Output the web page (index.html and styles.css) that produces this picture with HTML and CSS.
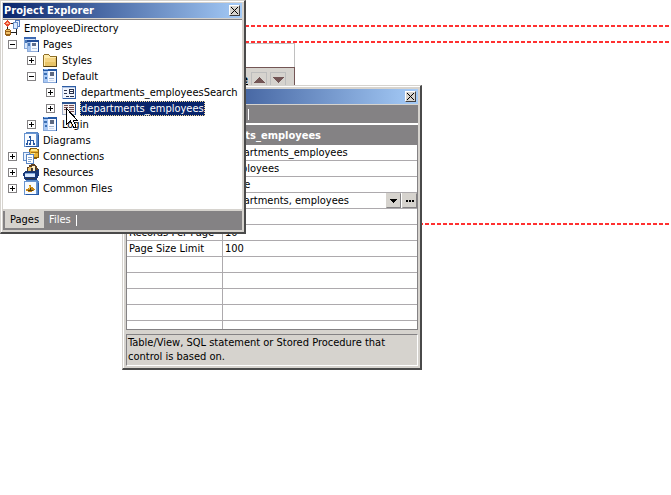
FILE: index.html
```html
<!DOCTYPE html>
<html lang="en">
<head>
<meta charset="utf-8">
<title>Project Explorer</title>
<link rel="stylesheet" href="styles.css">
</head>
<body>
<svg class="defs" aria-hidden="true">
  <symbol id="i-project" viewBox="0 0 16 16">
    <path fill="#e84c30" d="M3 0h1v1h1v1h1v1h1v1h-1v1h-1v1h-1v1h-1v-1h-1v-1h-1v-1h-1v-1h1v-1h1v-1h1z"/>
    <path fill="#ffb890" d="M3 2h1v1h1v1h-3v-1h1z"/>
    <path fill="#5078bc" d="M11 0h5v7h-5z"/><path fill="#e8f0ff" d="M12 1h3v5h-3z"/>
    <path fill="#6890c8" d="M9 2h5v7h-5z"/><path fill="#d8e8ff" d="M10 3h3v5h-3z"/>
    <path fill="#222" d="M7 3h2v1h-2zM3 7h1v3h-1zM6 12h6v1h-6zM12 9h1v6h-1z"/>
    <path fill="#986018" d="M2 9h4v1h1v5h-1v1h-4v-1h-1v-5h1z"/><path fill="#f0c068" d="M2 10h4v1h-4zM2 12h4v2h-4z"/>
  </symbol>
  <symbol id="i-pages" viewBox="0 0 16 16">
    <path fill="#88a8d8" d="M1 1h12v12h-12z"/><path fill="#d8e8fc" d="M2 3h10v9h-10z"/><path fill="#3c68b0" d="M1 1h12v2h-12z"/>
    <path fill="#90acd8" d="M4 4h12v12h-12z"/><path fill="#f4f8ff" d="M5 6h10v9h-10z"/><path fill="#204c98" d="M4 4h12v2h-12zM15 5h1v11h-1z"/>
    <path fill="#a4c4f0" d="M5 6h3v9h-3z"/><path fill="#5c6c8c" d="M9 7h4v3h-4z"/><path fill="#4878b8" d="M5 7h2v3h-2zM2 4h2v3h-2z"/><path fill="#b8c8e0" d="M9 12h5v1h-5z"/>
  </symbol>
  <symbol id="i-folder" viewBox="0 0 16 16">
    <path fill="#907028" d="M2 2h5v1h1v1h7v11h-14v-12h1z"/><path fill="#ffecac" d="M2 3h5v1h1v1h6v9h-12z"/>
    <path fill="#e8c468" d="M3 6h11v8h-11z"/><path fill="#f4d484" d="M3 6h10v4h-10z"/><path fill="#584010" d="M14 5h1v10h-13v-1h12z"/>
  </symbol>
  <symbol id="i-page" viewBox="0 0 16 16">
    <path fill="#88a8d8" d="M1 1h14v14h-14z"/><path fill="#f6f9ff" d="M2 3h12v11h-12z"/><path fill="#2458a4" d="M1 1h14v2h-14zM14 3h1v12h-1z"/>
    <path fill="#80b0ec" d="M2 1h4v1h-4z"/><path fill="#a8c8f4" d="M2 3h4v11h-4z"/><path fill="#3c70b4" d="M2 5h3v2h-3zM3 9h2v2h-2z"/>
    <path fill="#5c6880" d="M8 4h4v4h-4z"/><path fill="#a0b4d0" d="M7 10h5v1h-5z"/><path fill="#d0dcf0" d="M7 12h5v1h-5z"/>
  </symbol>
  <symbol id="i-search" viewBox="0 0 16 16">
    <path fill="#b0c4e4" d="M1 2h14v13h-14z"/><path fill="#f0f4fc" d="M2 4h12v10h-12z"/><path fill="#2c5ca4" d="M1 2h14v1h-14zM14 3h1v12h-13v-1h12z"/>
    <path fill="#28324c" d="M3 6h3v1h-3zM3 9h3v1h-3zM8 5h5v5h-5zM5 12h3v1h-3zM9 12h4v1h-4z"/>
    <path fill="#fff" d="M9 6h3v1h-3zM9 8h3v1h-3z"/>
  </symbol>
  <symbol id="i-grid" viewBox="0 0 16 16">
    <path fill="#9cacc8" d="M1 2h14v13h-14z"/><path fill="#f4f0f0" d="M2 3h12v11h-12z"/><path fill="#2c5490" d="M1 2h14v2h-14zM14 3h1v12h-1z"/>
    <path fill="#744c50" d="M3 5h4v1h-4zM8 5h5v1h-5zM3 7h4v1h-4zM8 7h5v1h-5zM3 9h4v1h-4zM8 9h5v1h-5zM8 11h5v1h-5z"/>
  </symbol>
  <symbol id="i-diagrams" viewBox="0 0 16 16">
    <path fill="#5888c8" d="M3 0h12v1h1v13h-13z"/><path fill="#dce8fc" d="M4 1h10v12h-10z"/><path fill="#6894d0" d="M1 1h13v14h-13z"/><path fill="#f8fbff" d="M2 2h11v12h-11z"/>
    <path fill="#2858a0" d="M6 4h2v2h-2zM3 11h2v2h-2zM6 11h2v2h-2zM10 11h2v2h-2zM7 6h1v5h-1zM4 8h7v1h-7zM4 9h1v2h-1zM10 9h1v2h-1zM15 3h1v12h-13v-1h12z"/>
  </symbol>
  <symbol id="i-connections" viewBox="0 0 16 16">
    <path fill="#8c6008" d="M7 0h7v1h2v9h-2v1h-7v-1h-1v-9h1z"/><path fill="#e8b438" d="M7 2h8v7h-8z"/><path fill="#ffe890" d="M8 1h6v2h-6zM8 5h4v1h-4z"/><path fill="#a87410" d="M8 4h7v1h-7z"/>
    <path fill="#6890c8" d="M0 4h7v9h-7z"/><path fill="#e8f2ff" d="M1 5h5v7h-5z"/><path fill="#5884c4" d="M3 6h8v10h-8z"/><path fill="#fff" d="M4 7h6v8h-6z"/>
    <path fill="#88a8d0" d="M5 9h4v1h-4zM5 11h4v1h-4zM5 13h3v1h-3z"/>
  </symbol>
  <symbol id="i-resources" viewBox="0 0 16 16">
    <path fill="#604020" d="M6 1h2v-1h4v1h1v1h1v2h1v4h-11v-5h2z"/><path fill="#f0c468" d="M6 3h3v4h-4v-3h1z"/><path fill="#fff0c8" d="M9 2h3v5h-2v-3h-1z"/>
    <path fill="#183878" d="M2 7h11v-1h2v-1h1v7h-1v2h-1v2h-12v-1h-1v-3h-1v-3h1v-1h1z"/><path fill="#80a8dc" d="M2 9h10v1h-10z"/><path fill="#d8e8ff" d="M2 10h10v3h-10z"/><path fill="#303848" d="M4 5h1v3h-1zM8 4h1v4h-1zM12 4h1v4h-1zM3 14h9v1h-9z"/>
  </symbol>
  <symbol id="i-common" viewBox="0 0 16 16">
    <path fill="#5888c8" d="M3 0h12v1h1v13h-13z"/><path fill="#dce8fc" d="M4 1h10v12h-10z"/><path fill="#6894d0" d="M1 1h13v14h-13z"/><path fill="#f8fbff" d="M2 2h11v12h-11z"/>
    <path fill="#2458a8" d="M15 3h1v12h-13v-1h12z"/>
    <path fill="#c88818" d="M6 5h2v2h2v1h1v1h1v1h-1v1h-2v1h-4v-1h-2v-2h2v-1h1z"/><path fill="#503c18" d="M7 8h1v2h-1zM5 10h5v1h-5z"/><path fill="#f8cc60" d="M6 6h1v3h-1z"/>
  </symbol>
  <symbol id="i-close" viewBox="0 0 7 7">
    <path fill="#000" d="M0 0h1v1h-1zM1 1h1v1h-1zM2 2h1v1h-1zM3 3h1v1h-1zM4 4h1v1h-1zM5 5h1v1h-1zM6 6h1v1h-1zM6 0h1v1h-1zM5 1h1v1h-1zM4 2h1v1h-1zM2 4h1v1h-1zM1 5h1v1h-1zM0 6h1v1h-1z"/>
  </symbol>
</svg>

<main class="page">
  <hr class="guide">
  <hr class="guide">
  <section class="preview">
    <div class="preview-top"></div>
    <div class="preview-head">
      <a href="#">Name</a>
      <button class="sort" aria-label="Sort ascending"><svg viewBox="0 0 11 6"><path fill="#735555" d="M5 0h1v1h1v1h1v1h1v1h1v1h1v1h-11v-1h1v-1h1v-1h1v-1h1v-1h1z"/></svg></button>
      <button class="sort" aria-label="Sort descending"><svg viewBox="0 0 11 6"><path fill="#735555" d="M0 0h11v1h-1v1h-1v1h-1v1h-1v1h-1v1h-1v-1h-1v-1h-1v-1h-1v-1h-1v-1h-1z"/></svg></button>
    </div>
  </section>
  <hr class="guide">
</main>

<section class="window properties">
  <header class="titlebar"><h2>Properties</h2><button class="close" aria-label="Close properties"><svg><use href="#i-close"/></svg></button></header>
  <nav class="tabs short"><button class="tab active">Data</button><button class="tab">Format</button><span class="caret"></span></nav>
  <div class="sheet">
    <table>
      <caption>Grid: departments_employees</caption>
      <tbody>
        <tr><th scope="row">Name</th><td>departments_employees</td></tr>
        <tr><th scope="row">Caption</th><td>Employees</td></tr>
        <tr><th scope="row">Source Type</th><td>Table</td></tr>
        <tr><th scope="row"><label for="source">Data Source</label></th><td><div class="combo"><input id="source" value="departments, employees"><button aria-label="Show list"><svg class="drop" viewBox="0 0 7 4"><path d="M0 0h7v1h-1v1h-1v1h-1v1h-1v-1h-1v-1h-1v-1h-1z"/></svg></button><button aria-label="Browse"><svg class="dots" viewBox="0 0 8 2"><path d="M0 0h2v2h-2zM3 0h2v2h-2zM6 0h2v2h-2z"/></svg></button></div></td></tr>
        <tr><th scope="row">Order By</th><td></td></tr>
        <tr><th scope="row">Records Per Page</th><td>10</td></tr>
        <tr><th scope="row">Page Size Limit</th><td>100</td></tr>
        <tr><th></th><td></td></tr>
        <tr><th></th><td></td></tr>
        <tr><th></th><td></td></tr>
        <tr><th></th><td></td></tr>
        <tr class="last"><th></th><td></td></tr>
      </tbody>
    </table>
  </div>
  <p class="hint">Table/View, SQL statement or Stored Procedure that control is based on.</p>
</section>

<section class="window explorer">
  <header class="titlebar"><h1>Project Explorer</h1><button class="close" aria-label="Close explorer"><svg><use href="#i-close"/></svg></button></header>
  <div class="tree">
    <div class="row root"><svg class="icon"><use href="#i-project"/></svg><span>EmployeeDirectory</span></div>
    <ul>
      <li><div class="row"><button class="toggle open" aria-label="Collapse Pages"></button><svg class="icon"><use href="#i-pages"/></svg><span>Pages</span></div>
        <ul>
          <li><div class="row"><button class="toggle" aria-label="Expand Styles"></button><svg class="icon"><use href="#i-folder"/></svg><span>Styles</span></div></li>
          <li><div class="row"><button class="toggle open" aria-label="Collapse Default"></button><svg class="icon"><use href="#i-page"/></svg><span>Default</span></div>
            <ul>
              <li><div class="row"><button class="toggle" aria-label="Expand search"></button><svg class="icon"><use href="#i-search"/></svg><span>departments_employeesSearch</span></div></li>
              <li><div class="row"><button class="toggle" aria-label="Expand grid"></button><svg class="icon"><use href="#i-grid"/></svg><span class="selected">departments_employees</span></div></li>
            </ul>
          </li>
          <li><div class="row"><button class="toggle" aria-label="Expand Login"></button><svg class="icon"><use href="#i-page"/></svg><span>Login</span></div></li>
        </ul>
      </li>
      <li><div class="row"><i class="blank"></i><svg class="icon"><use href="#i-diagrams"/></svg><span>Diagrams</span></div></li>
      <li><div class="row"><button class="toggle" aria-label="Expand Connections"></button><svg class="icon"><use href="#i-connections"/></svg><span>Connections</span></div></li>
      <li><div class="row"><button class="toggle" aria-label="Expand Resources"></button><svg class="icon"><use href="#i-resources"/></svg><span>Resources</span></div></li>
      <li><div class="row"><button class="toggle" aria-label="Expand Common Files"></button><svg class="icon"><use href="#i-common"/></svg><span>Common Files</span></div></li>
    </ul>
  </div>
  <nav class="tabs"><button class="tab active">Pages</button><button class="tab">Files</button><span class="caret"></span></nav>
</section>

<svg class="pointer" viewBox="0 0 12 21" aria-hidden="true">
  <path fill="#fff" stroke="#000" d="M.5.5v16l4-4 3 7h2v-2l-2-5h4z"/>
</svg>
</body>
</html>
```
FILE: styles.css
```css
* { box-sizing: border-box; }

body {
  margin: 0;
  background: #fff;
  color: #000;
  font: 11px/16px "DejaVu Sans Condensed", "DejaVu Sans", sans-serif;
}

button {
  margin: 0;
  padding: 0;
  border: 0;
  background: none;
  color: inherit;
  font: inherit;
}

ul { margin: 0; padding: 0; list-style: none; }
svg { display: block; shape-rendering: crispEdges; }
.defs { position: absolute; width: 0; height: 0; }

/* Page canvas behind the windows */
.page { padding-top: 25px; }

.guide {
  height: 2px;
  margin: 0 0 14px;
  border: 0;
  background: repeating-linear-gradient(90deg, #ff3131 0 4px, transparent 4px 6px) 5px 0;
}

.guide + .preview { margin-top: -14px; }
.preview { width: 295px; height: 180px; }
.preview-top { height: 24px; border: 1px solid #c0c0c0; border-top: 1px solid #c0c0c0; border-bottom: 0; }

.preview-head {
  display: flex;
  justify-content: flex-end;
  gap: 3px;
  height: 40px;
  padding: 4px 8px;
  border: 1px solid #735555;
  border-left: 0;
  background: #d6d3ce;
}

.preview-head a { color: #000; font-weight: bold; }

.sort {
  display: grid;
  place-items: center;
  width: 16px;
  height: 15px;
  border: 1px solid #bdbdbd;
}

.sort svg { width: 11px; height: 6px; }

/* Windows */
.window {
  position: absolute;
  border: 1px solid #d6d3ce;
  border-right: 2px solid #4a4a4a;
  border-bottom: 2px solid #4a4a4a;
  background: #d6d3ce;
  padding: 2px;
  box-shadow: inset 1px 1px #fff;
}

.explorer { left: 0; top: 0; width: 246px; }
.properties { left: 122px; top: 85px; width: 300px; padding: 3px 2px 2px 3px; }

.titlebar {
  display: flex;
  align-items: center;
  justify-content: space-between;
  height: 15px;
  padding: 0 2px 0 1px;
  background: linear-gradient(90deg, #08246b, #a5cbf7);
  color: #fff;
}

.titlebar h1,
.titlebar h2 { margin: 0; font-size: 11px; line-height: 16px; }

.close {
  display: grid;
  place-items: center;
  width: 11px;
  height: 11px;
  border: 1px solid;
  border-color: #fff #424142 #424142 #fff;
  background: #d6d3ce;
}

.close svg { width: 7px; height: 7px; }

/* Tree */
.tree {
  height: 190px;
  margin: 1px 0 2px;
  border-top: 1px solid #848284;
  background: #fff;
}

.tree > ul { padding-left: 5px; }
.tree li ul { padding-left: 19px; }
.row { display: flex; align-items: center; height: 16px; }
.root { padding-left: 1px; }
.icon { width: 16px; height: 16px; margin-right: 3px; }
.row span { padding: 0 1px; line-height: 17px; white-space: nowrap; }

.toggle,
.blank { width: 9px; height: 9px; margin-right: 6px; }

.toggle {
  border: 1px solid #848284;
  background:
    linear-gradient(#000, #000) center / 5px 1px no-repeat,
    linear-gradient(#000, #000) center / 1px 5px no-repeat;
}

.toggle.open { background: linear-gradient(#000, #000) center / 5px 1px no-repeat; }

.row .selected {
  height: 15px;
  line-height: 15px;
  background: #08246b;
  color: #fff;
  outline: 1px dotted #f7db94;
  outline-offset: -1px;
}

/* Tabs */
.tabs {
  display: flex;
  height: 19px;
  padding: 0 2px 2px;
  background: #848284;
  color: #fff;
}

.tab { padding: 0 5px; }
.tab.active { background: #d6d3ce; color: #000; }
.caret { width: 1px; height: 11px; margin-top: 4px; background: #fff; }
.tabs.short { height: 18px; margin: 1px 0; }
.short .tab { width: 60px; }

/* Property grid */
.sheet {
  margin-top: 2px;
  border: 1px solid #848284;
  box-shadow: 0 -2px #fff;
}

table { width: 100%; border-spacing: 0; table-layout: fixed; background: #fff; }

caption {
  height: 19px;
  padding-right: 96px;
  background: #848284;
  color: #fff;
  font-weight: bold;
  line-height: 19px;
  text-align: right;
  white-space: nowrap;
}

th,
td {
  height: 16px;
  padding: 0 2px;
  border-bottom: 1px solid #adaaad;
  font-weight: normal;
  line-height: 15px;
  text-align: left;
  white-space: nowrap;
}

th { width: 96px; border-right: 1px solid #adaaad; }
.last th,
.last td { height: 8px; border-bottom: 0; }

.combo { display: flex; height: 15px; margin-right: -2px; gap: 1px; }
.combo input { flex: 1; min-width: 0; padding: 0; border: 0; font: inherit; }

.combo button {
  display: grid;
  place-items: center;
  width: 15px;
  border: 1px solid;
  border-color: #d6d3ce #848284 #848284 #d6d3ce;
  background: #d6d3ce;
}

.drop { width: 7px; height: 4px; }
.dots { width: 8px; height: 2px; }

.hint {
  margin: 4px 0 0;
  padding: 1px;
  border: 1px solid;
  border-color: #848284 #fff #fff #848284;
  line-height: 14px;
}

/* Mouse pointer over the tree */
.pointer { position: absolute; left: 66px; top: 108px; width: 12px; height: 21px; }
```
